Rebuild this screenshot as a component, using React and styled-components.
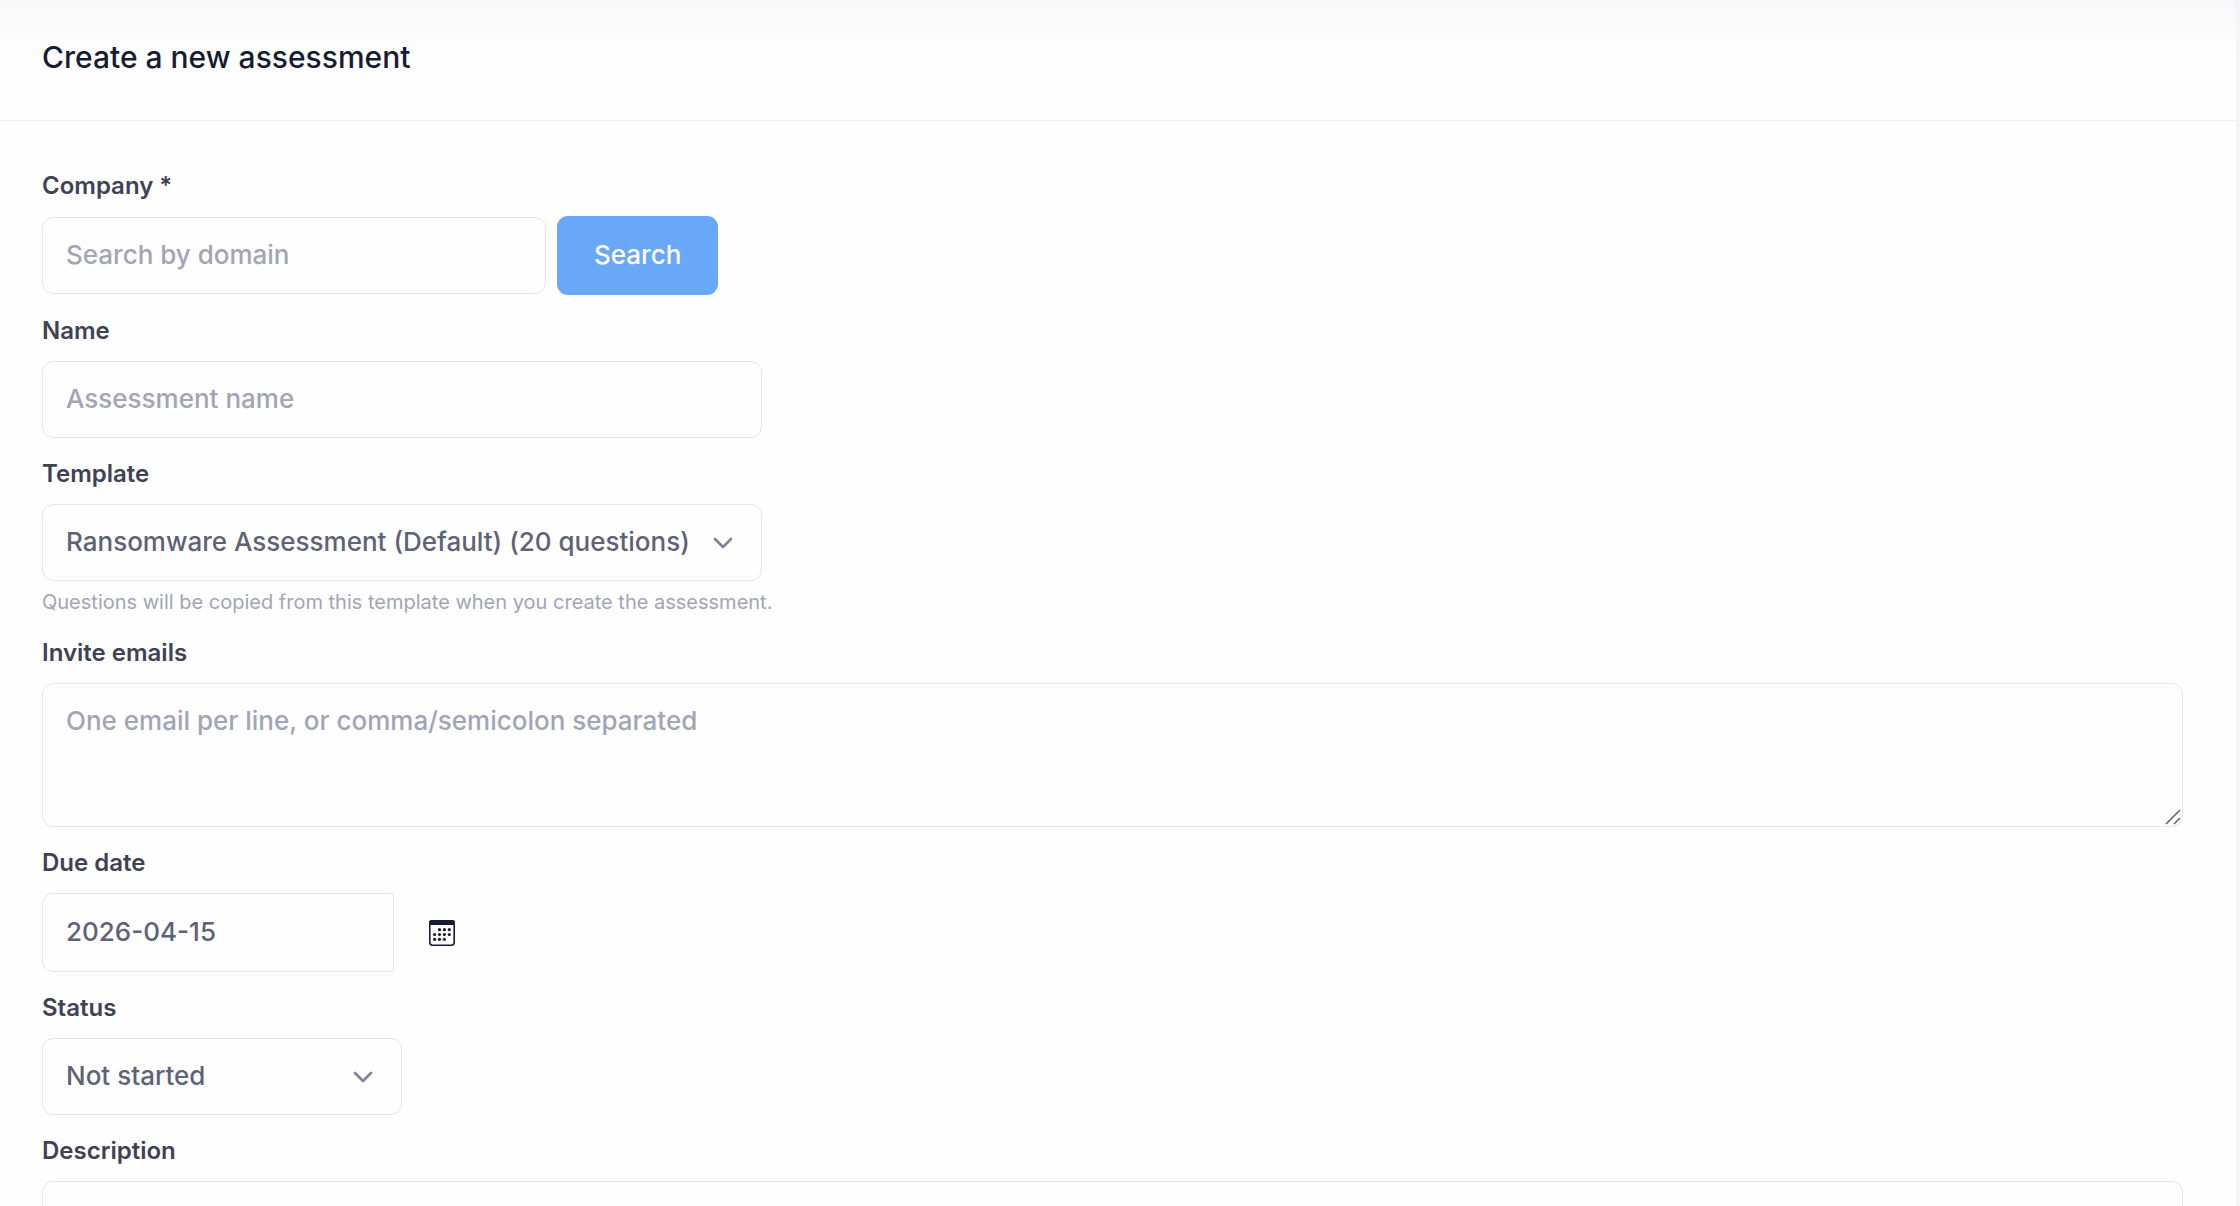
import React, { useState } from "react";
import styled, { createGlobalStyle, css } from "styled-components";

const GlobalStyle = createGlobalStyle`
  * {
    box-sizing: border-box;
  }

  body {
    margin: 0;
    background: #f4f5fa;
    font-family: Inter, "Liberation Sans", sans-serif;
    color: #181c32;
    -webkit-font-smoothing: antialiased;
  }
`;

const Page = styled.main`
  padding-right: 4px;
`;

const Card = styled.section`
  min-height: 100vh;
  background: #fefefe;
  border-top-right-radius: 12px;
  overflow: hidden;
`;

const CardHeader = styled.header`
  display: flex;
  align-items: center;
  padding: 37px 42px 43px;
  border-bottom: 1px solid #f0f1f4;
  background: linear-gradient(#f8f8f8, #fefefe 62px);
`;

const Title = styled.h1`
  margin: 0;
  font-size: 30px;
  line-height: 40px;
  font-weight: 500;
`;

const Form = styled.form`
  display: flex;
  flex-direction: column;
  gap: 17px;
  padding: 46px 53px 46px 42px;
`;

const Field = styled.div`
  display: flex;
  flex-direction: column;
  align-items: flex-start;
`;

const Label = styled.label`
  margin-bottom: 11px;
  font-size: 24px;
  line-height: 38px;
  font-weight: 600;
  color: #3f4254;
`;

const Row = styled.div`
  display: flex;
  align-items: center;
  gap: ${(props) => props.$gap || 0}px;
  height: 79px;
`;

const control = css`
  display: block;
  margin: 0;
  border: 1px solid #e4e6ef;
  border-radius: 11px;
  background: #fefefe;
  font-family: inherit;
  font-size: 26px;
  line-height: 39px;
  font-weight: 500;
  color: #5e6278;
  outline: none;

  &::placeholder {
    color: #a1a5b7;
    opacity: 1;
  }

  &:focus {
    border-color: #b5b5c3;
  }
`;

const Input = styled.input`
  ${control}
  width: ${(props) => props.$width}px;
  max-width: 100%;
  height: 77px;
  padding: 0 23px 2px;
`;

const DateInput = styled(Input)`
  height: 79px;
  border-radius: 11px 0 0 11px;
`;

const SelectWrap = styled.div`
  position: relative;
  width: ${(props) => props.$width}px;
  max-width: 100%;

  svg {
    position: absolute;
    top: 33px;
    right: 28px;
    pointer-events: none;
  }
`;

const Select = styled.select`
  ${control}
  appearance: none;
  width: 100%;
  height: 77px;
  padding: 0 60px 2px 23px;
`;

const TextareaWrap = styled.div`
  position: relative;
  width: 100%;

  svg {
    position: absolute;
    right: 1px;
    bottom: 1px;
    pointer-events: none;
  }
`;

const Textarea = styled.textarea`
  ${control}
  width: 100%;
  height: 144px;
  padding: 17px 23px;
  resize: none;
`;

const SearchBtn = styled.button`
  height: 79px;
  padding: 0 37px 2px;
  border: none;
  border-radius: 11px;
  background: #69a8f9;
  color: #fff;
  font-family: inherit;
  font-size: 26px;
  line-height: 39px;
  font-weight: 500;
  cursor: pointer;

  &:hover {
    background: #5499f5;
  }
`;

const CalendarBtn = styled.button`
  display: flex;
  align-items: center;
  justify-content: center;
  width: 96px;
  height: 79px;
  padding: 0;
  border: none;
  background: transparent;
  color: #181c32;
  cursor: pointer;
`;

const Help = styled.p`
  margin: 6px 0 0;
  font-size: 20px;
  line-height: 30px;
  color: #a1a5b7;
`;

const Chevron = () => (
  <svg width="22" height="14" viewBox="0 0 22 14" fill="none" aria-hidden="true">
    <path
      d="M3 2l8 8 8-8"
      stroke="#7e8299"
      strokeWidth="2.6"
      strokeLinecap="round"
      strokeLinejoin="round"
    />
  </svg>
);

const Grip = () => (
  <svg width="18" height="18" viewBox="0 0 18 18" aria-hidden="true">
    <path d="M2 16L16 2M10 16l6-6" stroke="#666" strokeWidth="1.6" />
  </svg>
);

// dots on the calendar sheet, as [column, row]
const days = [
  [1, 0], [2, 0], [3, 0],
  [0, 1], [1, 1], [2, 1], [3, 1],
  [0, 2], [1, 2], [2, 2],
];

const CalendarIcon = () => (
  <svg width="26" height="26" viewBox="0 0 26 26" aria-hidden="true">
    <rect x="0.8" y="0.8" width="24.4" height="24.4" rx="2.6" fill="none" stroke="currentColor" strokeWidth="1.6" />
    <path d="M0 5V3a3 3 0 013-3h20a3 3 0 013 3v2z" fill="currentColor" />
    {days.map(([col, row]) => (
      <circle key={`${col}-${row}`} cx={5.6 + col * 4.9} cy={9.7 + row * 4.8} r="1.6" fill="currentColor" />
    ))}
  </svg>
);

const App = () => {
  const [company, setCompany] = useState("");
  const [name, setName] = useState("");
  const [emails, setEmails] = useState("");
  const [dueDate, setDueDate] = useState("2026-04-15");
  const [description, setDescription] = useState("");

  return (
    <Page>
      <GlobalStyle />
      <Card>
        <CardHeader>
          <Title>Create a new assessment</Title>
        </CardHeader>
        <Form onSubmit={(e) => e.preventDefault()}>
          <Field>
            <Label htmlFor="company">Company *</Label>
            <Row $gap={11}>
              <Input
                id="company"
                $width={504}
                placeholder="Search by domain"
                value={company}
                onChange={(e) => setCompany(e.target.value)}
              />
              <SearchBtn type="button">Search</SearchBtn>
            </Row>
          </Field>
          <Field>
            <Label htmlFor="name">Name</Label>
            <Input
              id="name"
              $width={720}
              placeholder="Assessment name"
              value={name}
              onChange={(e) => setName(e.target.value)}
            />
          </Field>
          <Field>
            <Label htmlFor="template">Template</Label>
            <SelectWrap $width={720}>
              <Select id="template">
                <option>Ransomware Assessment (Default) (20 questions)</option>
              </Select>
              <Chevron />
            </SelectWrap>
            <Help>Questions will be copied from this template when you create the assessment.</Help>
          </Field>
          <Field>
            <Label htmlFor="emails">Invite emails</Label>
            <TextareaWrap>
              <Textarea
                id="emails"
                placeholder="One email per line, or comma/semicolon separated"
                value={emails}
                onChange={(e) => setEmails(e.target.value)}
              />
              <Grip />
            </TextareaWrap>
          </Field>
          <Field>
            <Label htmlFor="due">Due date</Label>
            <Row>
              <DateInput
                id="due"
                $width={352}
                value={dueDate}
                onChange={(e) => setDueDate(e.target.value)}
              />
              <CalendarBtn type="button" aria-label="Calendar">
                <CalendarIcon />
              </CalendarBtn>
            </Row>
          </Field>
          <Field>
            <Label htmlFor="status">Status</Label>
            <SelectWrap $width={360}>
              <Select id="status">
                <option>Not started</option>
              </Select>
              <Chevron />
            </SelectWrap>
          </Field>
          <Field>
            <Label htmlFor="description">Description</Label>
            <TextareaWrap>
              <Textarea
                id="description"
                value={description}
                onChange={(e) => setDescription(e.target.value)}
              />
              <Grip />
            </TextareaWrap>
          </Field>
        </Form>
      </Card>
    </Page>
  );
};

export default App;
